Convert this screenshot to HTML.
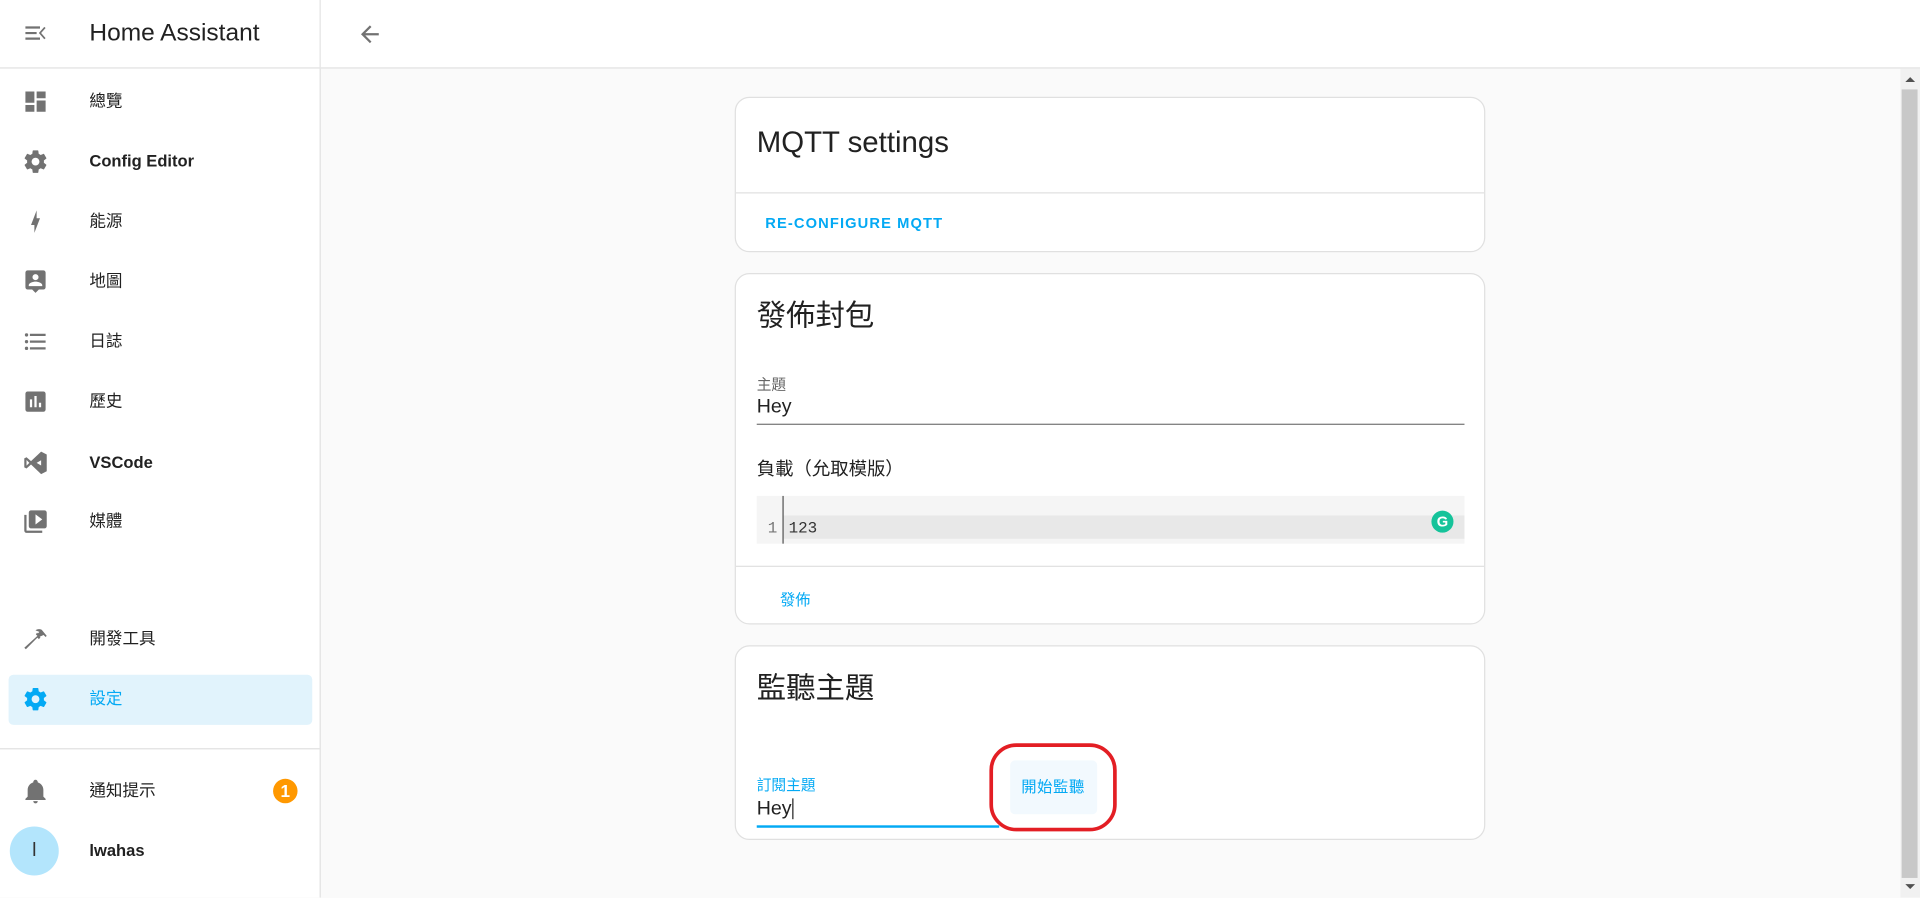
<!DOCTYPE html>
<html><head><meta charset="utf-8"><style>
*{box-sizing:border-box;margin:0;padding:0}
html,body{width:1920px;height:897px;overflow:hidden;background:#fafafa}
#w{position:absolute;left:0;top:0;width:1568px;height:733px;transform:scale(1.22449);transform-origin:0 0;font-family:"Liberation Sans","Noto Sans CJK TC",sans-serif;color:#212121}
.a{position:absolute}
.side{left:0;top:0;width:262px;height:733px;background:#fff;border-right:1px solid #e0e0e0}
.hdr{left:262px;top:0;width:1306px;height:56px;background:#fff;border-bottom:1px solid #e0e0e0}
.it{position:absolute;left:73px;font-size:13.5px;line-height:20px;transform:translateY(-10px)}
.ic{position:absolute;left:18px;width:22px;height:22px;transform:translateY(-11px)}
.card{position:absolute;left:600px;width:613px;background:#fff;border:1px solid #e0e0e0;border-radius:12px}
.t{position:absolute;left:17px;font-size:24px;line-height:30px}
.div{position:absolute;left:0;right:0;height:1px;background:#e0e0e0}
.blue{color:#03a9f4}
</style></head><body><div id="w">
<div class="a side">
 <svg class="ic" style="top:27px" viewBox="0 0 24 24" fill="#727272"><path d="M3 6h13v2H3zM3 11h10v2H3zM3 16h13v2H3zM21 7.5l-4 4.5 4 4.5-1.2 1-4.8-5.5 4.8-5.5z"/></svg>
 <div class="it" style="left:73px;top:27px;font-size:20px;line-height:24px;transform:translateY(-12px)">Home Assistant</div>
 <div class="a" style="left:0;top:55px;width:261px;height:1px;background:#e0e0e0"></div>
 <svg class="ic" style="top:83px" viewBox="0 0 24 24" fill="#727272"><path d="M3 13h8V3H3zm0 8h8v-6H3zm10 0h8V11h-8zm0-18v6h8V3z"/></svg><div class="it" style="top:83px">總覽</div>
 <svg class="ic" style="top:132px" viewBox="0 0 24 24" fill="#727272"><path d="M12 15.5A3.5 3.5 0 1 1 12 8.5a3.5 3.5 0 0 1 0 7m7.43-2.53c.04-.32.07-.64.07-.97s-.03-.66-.07-1l2.11-1.63c.19-.15.24-.42.12-.64l-2-3.46c-.12-.22-.39-.31-.61-.22l-2.49 1c-.52-.39-1.06-.73-1.69-.98l-.37-2.65A.506.506 0 0 0 14 2h-4c-.25 0-.46.18-.5.42l-.37 2.65c-.63.25-1.17.59-1.69.98l-2.49-1c-.22-.09-.49 0-.61.22l-2 3.460c-.13.22-.07.49.12.64L4.57 11c-.04.34-.07.67-.07 1s.03.65.07.97l-2.11 1.66c-.19.15-.25.42-.12.64l2 3.46c.12.22.39.3.61.22l2.49-1.01c.52.4 1.06.74 1.69.99l.37 2.65c.04.24.25.42.5.42h4c.25 0 .46-.18.5-.42l.37-2.65c.63-.26 1.17-.59 1.69-.99l2.49 1.01c.22.08.49 0 .61-.22l2-3.46c.12-.22.07-.49-.12-.64z"/></svg><div class="it" style="top:132px;font-weight:bold">Config Editor</div>
 <svg class="ic" style="top:181px" viewBox="0 0 24 24" fill="#727272"><path d="M11 15H8l5-13v7h3l-5 13z"/></svg><div class="it" style="top:181px">能源</div>
 <svg class="ic" style="top:230px" viewBox="0 0 24 24" fill="#727272"><path d="M19 2H5c-1.1 0-2 .9-2 2v13c0 1.1.9 2 2 2h4l3 3 3-3h4c1.1 0 2-.9 2-2V4c0-1.1-.9-2-2-2m-7 3.3a2.7 2.7 0 1 1 0 5.4 2.7 2.7 0 0 1 0-5.4M18 16H6v-.9c0-2 4-3.1 6-3.1s6 1.1 6 3.1z"/></svg><div class="it" style="top:230px">地圖</div>
 <svg class="ic" style="top:279px" viewBox="0 0 24 24" fill="#727272"><path d="M7 5h14v2H7zm0 6h14v2H7zm0 6h14v2H7zM4 4.5a1.5 1.5 0 1 1 0 3 1.5 1.5 0 0 1 0-3m0 6a1.5 1.5 0 1 1 0 3 1.5 1.5 0 0 1 0-3m0 6a1.5 1.5 0 1 1 0 3 1.5 1.5 0 0 1 0-3"/></svg><div class="it" style="top:279px">日誌</div>
 <svg class="ic" style="top:328px" viewBox="0 0 24 24" fill="#727272"><path d="M19 3H5c-1.1 0-2 .9-2 2v14c0 1.1.9 2 2 2h14c1.1 0 2-.9 2-2V5c0-1.1-.9-2-2-2M9 17H7v-7h2zm4 0h-2V7h2zm4 0h-2v-4h2z"/></svg><div class="it" style="top:328px">歷史</div>
 <svg class="ic" style="top:378px" viewBox="0 0 24 24" fill="#727272"><path d="M17 2l5 2.5v15L17 22 8 13.5 4 17l-2-1V8l2-1 4 3.5zM4 9.5v5l2.5-2.5zm13 .2L13 12l4 2.3z"/></svg><div class="it" style="top:378px;font-weight:bold">VSCode</div>
 <svg class="ic" style="top:426px" viewBox="0 0 24 24" fill="#727272"><path d="M4 6H2v14c0 1.1.9 2 2 2h14v-2H4zm16-4H8c-1.1 0-2 .9-2 2v12c0 1.1.9 2 2 2h12c1.1 0 2-.9 2-2V4c0-1.1-.9-2-2-2m-8 12.5v-9l6 4.5z"/></svg><div class="it" style="top:426px">媒體</div>
 <svg class="ic" style="top:522px" viewBox="0 0 24 24" fill="#727272"><path d="M2 19.6l1.4 1.4 10.3-10.4 1.3 1.3 1.4-1.4-.7-.7 3.5-1.5 1.8 1.8 1-1-4.5-5.5c-2-1-4.5-.5-5.5.5l3.5 1.4-1.4 1.4-.7-.7L12.3 7.7l1.4 1.4z"/></svg><div class="it" style="top:522px">開發工具</div>
 <div class="a" style="left:7px;top:551px;width:248px;height:41px;background:#e1f3fc;border-radius:4px"></div>
 <svg class="ic" style="top:571px" viewBox="0 0 24 24" fill="#03a9f4"><path d="M12 15.5A3.5 3.5 0 1 1 12 8.5a3.5 3.5 0 0 1 0 7m7.43-2.53c.04-.32.07-.64.07-.97s-.03-.66-.07-1l2.11-1.63c.19-.15.24-.42.12-.64l-2-3.46c-.12-.22-.39-.31-.61-.22l-2.49 1c-.52-.39-1.06-.73-1.69-.98l-.37-2.65A.506.506 0 0 0 14 2h-4c-.25 0-.46.18-.5.42l-.37 2.65c-.63.25-1.17.59-1.69.98l-2.49-1c-.22-.09-.49 0-.61.22l-2 3.46c-.13.22-.07.49.12.64L4.57 11c-.04.34-.07.67-.07 1s.03.65.07.97l-2.11 1.66c-.19.15-.25.42-.12.64l2 3.46c.12.22.39.3.61.22l2.49-1.01c.52.4 1.06.74 1.69.99l.37 2.65c.04.24.25.42.5.42h4c.25 0 .46-.18.5-.42l.37-2.65c.63-.26 1.17-.59 1.69-.99l2.49 1.01c.22.08.49 0 .61-.22l2-3.46c.12-.22.07-.49-.12-.64z"/></svg><div class="it blue" style="top:571px">設定</div>
 <div class="a" style="left:0;top:611px;width:261px;height:1px;background:#e0e0e0"></div>
 <svg class="ic" style="top:646px" viewBox="0 0 24 24" fill="#727272"><path d="M21 19v1H3v-1l2-2v-6c0-3.1 2-5.8 5-6.7V4a2 2 0 0 1 4 0v.3c3 .9 5 3.6 5 6.7v6zm-7 2a2 2 0 0 1-4 0"/></svg><div class="it" style="top:646px">通知提示</div>
 <div class="a" style="left:223px;top:636px;width:20px;height:20px;border-radius:50%;background:#ff9800;color:#fff;font-size:14px;font-weight:bold;text-align:center;line-height:20px">1</div>
 <div class="a" style="left:8px;top:675px;width:40px;height:40px;border-radius:50%;background:#b3e5fc;text-align:center;line-height:40px;font-size:16px;color:#333">l</div>
 <div class="it" style="top:695px;font-weight:bold">lwahas</div>
</div>
<div class="a hdr"><svg class="a" style="left:29px;top:17px;width:22px;height:22px" viewBox="0 0 24 24" fill="#727272"><path d="M20 11v2H8l5.5 5.5-1.42 1.42L4.16 12l7.92-7.92L13.5 5.5 8 11z"/></svg></div>
<div class="a" style="left:1552px;top:56px;width:16px;height:677px;background:#f1f1f1"></div>
<div class="a" style="left:1553px;top:73px;width:13px;height:644px;background:#c8c8c8"></div>
<div class="a" style="left:1556px;top:63px;width:0;height:0;border:4px solid transparent;border-bottom-color:#505050;border-top:0"></div>
<div class="a" style="left:1556px;top:722px;width:0;height:0;border:4px solid transparent;border-top-color:#505050;border-bottom:0"></div>

<div class="card" style="top:79px;height:127px">
 <div class="t" style="top:22px">MQTT settings</div>
 <div class="div" style="top:77px"></div>
 <div class="a blue" style="left:24px;top:95px;font-size:12px;font-weight:bold;letter-spacing:0.9px">RE-CONFIGURE MQTT</div>
</div>
<div class="card" style="top:223px;height:287px">
 <div class="t" style="top:20px">發佈封包</div>
 <div class="a" style="left:17px;top:81px;font-size:12px;color:#666">主題</div>
 <div class="a" style="left:17px;top:100px;font-size:16px">Hey</div>
 <div class="a" style="left:17px;top:122px;width:578px;height:1px;background:#777"></div>
 <div class="a" style="left:17px;top:148px;font-size:15px">負載（允取模版）</div>
 <div class="a" style="left:17px;top:181px;width:578px;height:39px;background:#f5f5f5"></div>
 <div class="a" style="left:38px;top:197px;width:557px;height:19px;background:#e8e8e8"></div>
 <div class="a" style="left:38px;top:181px;width:1px;height:39px;background:#555"></div>
 <div class="a" style="left:26px;top:200px;font-family:'Liberation Mono',monospace;font-size:13px;color:#777">1</div>
 <div class="a" style="left:43px;top:200px;font-family:'Liberation Mono',monospace;font-size:13px;color:#333">123</div>
 <div class="a" style="left:568px;top:193px;width:18px;height:18px;border-radius:50%;background:#15c39a;color:#fff;font-size:12px;font-weight:bold;text-align:center;line-height:18px">G</div>
 <div class="div" style="top:238px"></div>
 <div class="a blue" style="left:36px;top:255px;font-size:12.5px">發佈</div>
</div>
<div class="card" style="top:527px;height:159px">
 <div class="t" style="top:20px">監聽主題</div>
 <div class="a blue" style="left:17px;top:104px;font-size:12px">訂閱主題</div>
 <div class="a" style="left:17px;top:124px;font-size:16px">Hey<span style="border-left:1px solid #222;margin-left:1px"></span></div>
 <div class="a" style="left:17px;top:146px;width:198px;height:2px;background:#03a9f4"></div>
 <div class="a" style="left:224px;top:93px;width:71px;height:44px;background:#f2f9fe;border-radius:4px"></div>
 <div class="a blue" style="left:233px;top:104px;font-size:12.5px;letter-spacing:0.5px">開始監聽</div>
</div>
<div class="a" style="left:808px;top:607px;width:104px;height:72px;border:3px solid #e31e24;border-radius:22px"></div>
</div></body></html>
